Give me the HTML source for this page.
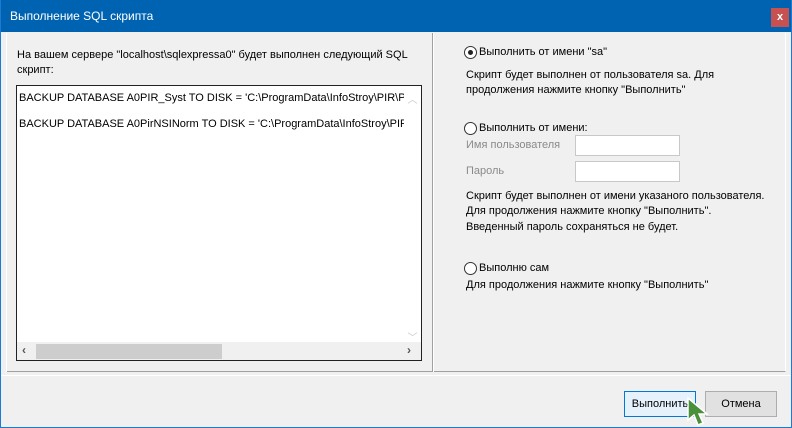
<!DOCTYPE html>
<html><head><meta charset="utf-8"><style>
*{margin:0;padding:0;box-sizing:border-box}
body{width:792px;height:428px;overflow:hidden;background:#f0f0f0;font-family:"Liberation Sans",sans-serif;font-size:11px;color:#000;position:relative}
.abs{position:absolute}
.win{left:0;top:0;width:792px;height:428px;border:1px solid #1a7ad4;border-top:none}
.title{left:0;top:0;width:792px;height:32px;background:#0063b1;color:#fff;font-size:12px;padding:9px 0 0 10px}
.close{left:771px;top:8px;width:18px;height:19px;background:#c75050;color:#fff;font-size:11px;text-align:center;line-height:18px;font-weight:bold}
.t{white-space:nowrap;line-height:15px}
.radio{width:13px;height:13px;border:1px solid #333;border-radius:50%;background:#fff}
.dot{left:3px;top:3px;width:5px;height:5px;border-radius:50%;background:#222}
.inp{background:#fff;border:1px solid #c8c8c8;width:105px;height:21px}
.btn{height:26px;border:1px solid #adadad;background:#e1e1e1;text-align:center;line-height:24px}
</style></head><body>
<div class="abs title">Выполнение SQL скрипта</div>
<div class="abs close">x</div>
<div class="abs" style="left:6px;top:33px;width:780px;height:339px;border-right:1px solid #fff;border-bottom:1px solid #a0a0a0"></div>
<div class="abs" style="left:0;top:375px;width:792px;height:1px;background:#fff"></div>
<div class="abs" style="left:432px;top:33px;width:1px;height:339px;background:#a0a0a0"></div>
<div class="abs" style="left:433px;top:33px;width:1px;height:339px;background:#fff"></div>
<div class="abs" style="left:6px;top:33px;width:1px;height:339px;background:#fff"></div>
<div class="abs t" style="left:17px;top:48px">На вашем сервере "localhost\sqlexpressa0" будет выполнен следующий SQL<br>скрипт:</div>
<div class="abs" style="left:16px;top:85px;width:406px;height:276px;border:1px solid #222;background:#fff;overflow:hidden">
<div class="abs t" style="left:2px;top:5px">BACKUP DATABASE A0PIR_Syst TO DISK = 'C:\ProgramData\InfoStroy\PIR\PirV</div>
<div class="abs t" style="left:2px;top:31px">BACKUP DATABASE A0PirNSINorm TO DISK = 'C:\ProgramData\InfoStroy\PIR\Pi</div>
<div class="abs" style="left:387px;top:0;width:17px;height:256px;background:#fff;color:#c8c8c8;font-size:10px;text-align:center"><div style="margin-top:5px">︿</div><div style="margin-top:223px">﹀</div></div>
<div class="abs" style="left:0;top:256px;width:404px;height:18px;background:#f0f0f0"></div>
<div class="abs" style="left:19px;top:258px;width:186px;height:15px;background:#cdcdcd"></div>
<div class="abs" style="left:5px;top:257px;font-size:12px;color:#555;font-weight:bold">‹</div>
<div class="abs" style="left:390px;top:257px;font-size:12px;color:#555;font-weight:bold">›</div>
</div>
<div class="abs radio" style="left:464px;top:46px"><div class="abs dot"></div></div>
<div class="abs t" style="left:479px;top:45px">Выполнить от имени "sa"</div>
<div class="abs t" style="left:466px;top:68px">Скрипт будет выполнен от пользователя sa. Для<br>продолжения нажмите кнопку "Выполнить"</div>
<div class="abs radio" style="left:464px;top:122px"></div>
<div class="abs t" style="left:479px;top:121px">Выполнить от имени:</div>
<div class="abs t" style="left:466px;top:138px;color:#8a8a8a">Имя пользователя</div>
<div class="abs inp" style="left:575px;top:135px"></div>
<div class="abs t" style="left:466px;top:164px;color:#8a8a8a">Пароль</div>
<div class="abs inp" style="left:575px;top:161px"></div>
<div class="abs t" style="left:466px;top:189px">Скрипт будет выполнен от имени указаного пользователя.<br>Для продолжения нажмите кнопку "Выполнить".</div>
<div class="abs t" style="left:466px;top:220px">Введенный пароль сохраняться не будет.</div>
<div class="abs radio" style="left:464px;top:262px"></div>
<div class="abs t" style="left:479px;top:261px">Выполню сам</div>
<div class="abs t" style="left:466px;top:278px">Для продолжения нажмите кнопку "Выполнить"</div>
<div class="abs btn" style="left:624px;top:391px;width:72px;border-color:#0078d7;background:#e5f1fb">Выполнить</div>
<div class="abs btn" style="left:705px;top:391px;width:72px">Отмена</div>
<svg class="abs" style="left:686px;top:396px" width="30" height="32"><path d="M2 2 L2 24 L8 19 L12 29 L17 27 L13 18 L21 18 Z" fill="#4a8f3a" stroke="#fff" stroke-width="1.5"/></svg>
<div class="abs win"></div>
</body></html>
